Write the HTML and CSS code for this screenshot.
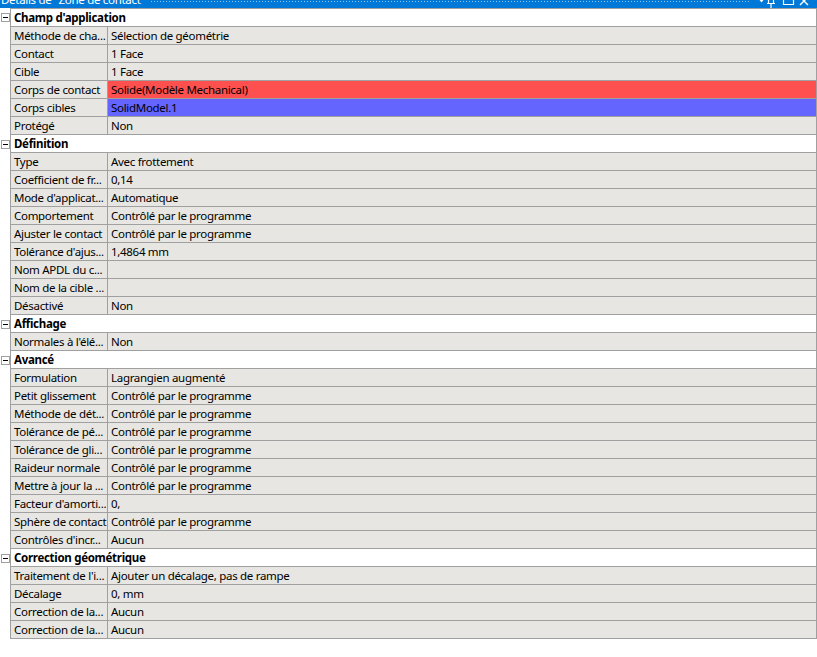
FILE: index.html
```html
<!DOCTYPE html>
<html lang="fr">
<head>
<meta charset="utf-8">
<title>Détails de "Zone de contact"</title>
<link rel="stylesheet" href="styles.css">
</head>
<body>
<div class="titlebar">
  <span class="title">Détails de "Zone de contact"</span>
  <span class="grip"></span>
  <svg class="tb-icons" width="60" height="8" viewBox="0 0 60 8">
    <path d="M2.5 0 L6.5 0 L4.5 2.5 Z" fill="#fff"/>
    <path d="M11.5 0 V3 M16.5 0 V3 M10 3.5 H18 M14 3.5 V8" stroke="#fff" stroke-width="1.2" fill="none"/>
    <path d="M26.5 -2 V4.5 H36.5 V-2" stroke="#fff" stroke-width="1.2" fill="none"/>
    <path d="M43 -3 L51 5 M51 -3 L43 5" stroke="#fff" stroke-width="1.4" fill="none"/>
  </svg>
</div>

<div class="grid">
  <div class="line section first"><div class="gutter"><span class="toggle"></span></div><div class="cells"><div class="hdr">Champ d'application</div></div></div>
  <div class="line"><div class="gutter"></div><div class="cells"><div class="k">Méthode de cha...</div><div class="v">Sélection de géométrie</div></div></div>
  <div class="line"><div class="gutter"></div><div class="cells"><div class="k">Contact</div><div class="v">1 Face</div></div></div>
  <div class="line"><div class="gutter"></div><div class="cells"><div class="k">Cible</div><div class="v">1 Face</div></div></div>
  <div class="line"><div class="gutter"></div><div class="cells"><div class="k">Corps de contact</div><div class="v red">Solide(Modèle Mechanical)</div></div></div>
  <div class="line"><div class="gutter"></div><div class="cells"><div class="k">Corps cibles</div><div class="v blue">SolidModel.1</div></div></div>
  <div class="line"><div class="gutter"></div><div class="cells"><div class="k">Protégé</div><div class="v">Non</div></div></div>

  <div class="line section"><div class="gutter"><span class="toggle"></span></div><div class="cells"><div class="hdr">Définition</div></div></div>
  <div class="line"><div class="gutter"></div><div class="cells"><div class="k">Type</div><div class="v">Avec frottement</div></div></div>
  <div class="line"><div class="gutter"></div><div class="cells"><div class="k">Coefficient de fr...</div><div class="v">0,14</div></div></div>
  <div class="line"><div class="gutter"></div><div class="cells"><div class="k">Mode d'applicat...</div><div class="v">Automatique</div></div></div>
  <div class="line"><div class="gutter"></div><div class="cells"><div class="k">Comportement</div><div class="v">Contrôlé par le programme</div></div></div>
  <div class="line"><div class="gutter"></div><div class="cells"><div class="k">Ajuster le contact</div><div class="v">Contrôlé par le programme</div></div></div>
  <div class="line"><div class="gutter"></div><div class="cells"><div class="k">Tolérance d'ajus...</div><div class="v">1,4864 mm</div></div></div>
  <div class="line"><div class="gutter"></div><div class="cells"><div class="k">Nom APDL du c...</div><div class="v"></div></div></div>
  <div class="line"><div class="gutter"></div><div class="cells"><div class="k">Nom de la cible ...</div><div class="v"></div></div></div>
  <div class="line"><div class="gutter"></div><div class="cells"><div class="k">Désactivé</div><div class="v">Non</div></div></div>

  <div class="line section"><div class="gutter"><span class="toggle"></span></div><div class="cells"><div class="hdr">Affichage</div></div></div>
  <div class="line"><div class="gutter"></div><div class="cells"><div class="k">Normales à l'élé...</div><div class="v">Non</div></div></div>

  <div class="line section"><div class="gutter"><span class="toggle"></span></div><div class="cells"><div class="hdr">Avancé</div></div></div>
  <div class="line"><div class="gutter"></div><div class="cells"><div class="k">Formulation</div><div class="v">Lagrangien augmenté</div></div></div>
  <div class="line"><div class="gutter"></div><div class="cells"><div class="k">Petit glissement</div><div class="v">Contrôlé par le programme</div></div></div>
  <div class="line"><div class="gutter"></div><div class="cells"><div class="k">Méthode de dét...</div><div class="v">Contrôlé par le programme</div></div></div>
  <div class="line"><div class="gutter"></div><div class="cells"><div class="k">Tolérance de pé...</div><div class="v">Contrôlé par le programme</div></div></div>
  <div class="line"><div class="gutter"></div><div class="cells"><div class="k">Tolérance de gli...</div><div class="v">Contrôlé par le programme</div></div></div>
  <div class="line"><div class="gutter"></div><div class="cells"><div class="k">Raideur normale</div><div class="v">Contrôlé par le programme</div></div></div>
  <div class="line"><div class="gutter"></div><div class="cells"><div class="k">Mettre à jour la ...</div><div class="v">Contrôlé par le programme</div></div></div>
  <div class="line"><div class="gutter"></div><div class="cells"><div class="k">Facteur d'amorti...</div><div class="v">0,</div></div></div>
  <div class="line"><div class="gutter"></div><div class="cells"><div class="k">Sphère de contact</div><div class="v">Contrôlé par le programme</div></div></div>
  <div class="line"><div class="gutter"></div><div class="cells"><div class="k">Contrôles d'incr...</div><div class="v">Aucun</div></div></div>

  <div class="line section"><div class="gutter"><span class="toggle"></span></div><div class="cells"><div class="hdr">Correction géométrique</div></div></div>
  <div class="line"><div class="gutter"></div><div class="cells"><div class="k">Traitement de l'i...</div><div class="v">Ajouter un décalage, pas de rampe</div></div></div>
  <div class="line"><div class="gutter"></div><div class="cells"><div class="k">Décalage</div><div class="v">0, mm</div></div></div>
  <div class="line"><div class="gutter"></div><div class="cells"><div class="k">Correction de la...</div><div class="v">Aucun</div></div></div>
  <div class="line"><div class="gutter"></div><div class="cells"><div class="k">Correction de la...</div><div class="v">Aucun</div></div></div>
</div>
</body>
</html>
```

FILE: styles.css
```css
html, body {
  margin: 0;
  padding: 0;
  background: #ffffff;
}
body {
  width: 817px;
  font-family: "Noto Sans", "Liberation Sans", sans-serif;
  font-size: 11.5px;
  letter-spacing: -0.3px;
  color: #000;
}
.titlebar {
  height: 8px;
  background: #0078d7;
  overflow: hidden;
  display: flex;
  align-items: flex-end;
  color: #fff;
}
.title {
  line-height: 16px;
  height: 16px;
  font-size: 11.5px;
  white-space: nowrap;
  padding-left: 1px;
}
.grip {
  flex: 1;
  height: 1px;
  margin: 0 6px 6px 6px;
  background: repeating-linear-gradient(to right, #8fc2ea 0 1px, transparent 1px 3px);
  align-self: flex-end;
}
.tb-icons {
  display: block;
  flex: none;
  align-self: flex-start;
}
.grid {
  display: flex;
  flex-direction: column;
}
.line {
  display: flex;
  height: 18px;
}
.gutter {
  width: 10px;
  position: relative;
}
.cells {
  flex: 1;
  display: flex;
  border-left: 1px solid #a0a0a0;
  border-right: 1px solid #a0a0a0;
  border-bottom: 1px solid #a0a0a0;
  background: #e7e6e2;
}
.first .cells {
  border-top: 1px solid #a0a0a0;
}
.first {
  height: 19px;
}
.section .cells {
  background: #ffffff;
}
.hdr {
  font-weight: bold;
  padding-left: 3px;
  line-height: 17px;
  white-space: nowrap;
}
.k {
  width: 93px;
  padding-left: 3px;
  border-right: 1px solid #a0a0a0;
  line-height: 17px;
  white-space: nowrap;
  overflow: hidden;
}
.v {
  flex: 1;
  padding-left: 3px;
  line-height: 17px;
  white-space: nowrap;
  overflow: hidden;
}
.red {
  background: #ff5050;
}
.blue {
  background: #6464ff;
}
.toggle {
  position: absolute;
  left: 1px;
  top: 5px;
  width: 7px;
  height: 7px;
  border: 1px solid #a0a0a0;
  background: #fff;
}
.toggle::after {
  content: "";
  position: absolute;
  left: 1px;
  top: 3px;
  width: 5px;
  height: 1px;
  background: #000;
}
```
